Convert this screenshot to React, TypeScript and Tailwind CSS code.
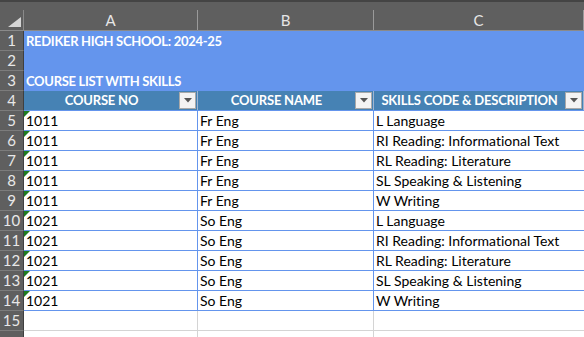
const rows = [
  { no: '1011', name: 'Fr Eng', skill: 'L Language' },
  { no: '1011', name: 'Fr Eng', skill: 'RI Reading: Informational Text' },
  { no: '1011', name: 'Fr Eng', skill: 'RL Reading: Literature' },
  { no: '1011', name: 'Fr Eng', skill: 'SL Speaking & Listening' },
  { no: '1011', name: 'Fr Eng', skill: 'W Writing' },
  { no: '1021', name: 'So Eng', skill: 'L Language' },
  { no: '1021', name: 'So Eng', skill: 'RI Reading: Informational Text' },
  { no: '1021', name: 'So Eng', skill: 'RL Reading: Literature' },
  { no: '1021', name: 'So Eng', skill: 'SL Speaking & Listening' },
  { no: '1021', name: 'So Eng', skill: 'W Writing' }
];

const RowNum = ({ n }: { n?: number }) => (
  <div className="flex h-full w-[24px] shrink-0 items-end justify-center border-r border-b border-r-[#3f3f3f] border-b-[#7c7c7c] bg-[#5f5f5f] pb-[1px] text-[15px] leading-[18px] text-[#e8e8e8]">
    {n}
  </div>
);

const FilterButton = () => (
  <div className="absolute right-[1px] top-[1px] flex h-[17px] w-[17px] items-center justify-center border border-[#a9a9a9] bg-[#f3f3f3]">
    <svg width="8" height="5" viewBox="0 0 8 5">
      <path d="M0 0 L8 0 L4 4.5 Z" fill="#555" />
    </svg>
  </div>
);

const HeaderCell = ({ label, className }: { label: string; className: string }) => (
  <div className={`relative flex h-full items-end border-r border-[#9fb6d1] pb-[1px] ${className}`}>
    <span className="w-full whitespace-nowrap pr-[18px] text-center text-[13px] font-bold leading-[18px] tracking-[-0.2px] text-white">
      {label}
    </span>
    <FilterButton />
  </div>
);

export default function App() {
  return (
    <div className="h-[337px] w-[584px] overflow-hidden bg-white font-['Lato',sans-serif] [font-variant-ligatures:none]">
      <div className="h-[10px] border-t-2 border-[#444] bg-[#5f5f5f]" />
      <div className="flex h-[21px] border-b border-[#8a8a8a] bg-[#5f5f5f] text-[15px] text-[#e6e6e6]">
        <div className="relative w-[24px] shrink-0 border-r border-[#8a8a8a]">
          <svg className="absolute bottom-[3px] right-[2px]" width="13" height="10" viewBox="0 0 13 10">
            <path d="M13 0 L13 10 L0 10 Z" fill="#d6d6d6" />
          </svg>
        </div>
        <div className="flex w-[174px] shrink-0 items-center justify-center border-r border-[#9a9a9a]">A</div>
        <div className="flex w-[176px] shrink-0 items-center justify-center border-r border-[#9a9a9a]">B</div>
        <div className="flex flex-1 items-center justify-center border-r border-[#9a9a9a]">C</div>
      </div>

      <div className="flex h-[20px]">
        <RowNum n={1} />
        <div className="flex flex-1 items-end whitespace-nowrap bg-[#6495ed] pb-[1px] pl-[2px] text-[13px] font-bold leading-[18px] tracking-[-0.3px] text-white">
          REDIKER HIGH SCHOOL: 2024-25
        </div>
      </div>
      <div className="flex h-[20px]">
        <RowNum n={2} />
        <div className="flex-1 bg-[#6495ed]" />
      </div>
      <div className="flex h-[20px]">
        <RowNum n={3} />
        <div className="flex flex-1 items-end whitespace-nowrap bg-[#6495ed] pb-[1px] pl-[2px] text-[13px] font-bold leading-[18px] tracking-[-0.3px] text-white">
          COURSE LIST WITH SKILLS
        </div>
      </div>
      <div className="flex h-[20px]">
        <RowNum n={4} />
        <div className="flex flex-1 border-b border-[#6495ed] bg-[#4682b4]">
          <HeaderCell label="COURSE NO" className="w-[174px] shrink-0" />
          <HeaderCell label="COURSE NAME" className="w-[176px] shrink-0" />
          <HeaderCell label="SKILLS CODE & DESCRIPTION" className="flex-1" />
        </div>
      </div>

      {rows.map((r, i) => (
        <div key={i} className="flex h-[20px]">
          <RowNum n={i + 5} />
          <div className="flex flex-1 border-b border-[#6495ed] text-[14px] leading-[18px] text-black">
            <div className="relative flex w-[174px] shrink-0 items-end border-r border-[#6495ed] pl-[2px]">
              <svg className="absolute left-0 top-0" width="6" height="6" viewBox="0 0 6 6">
                <path d="M0 0 L6 0 L0 6 Z" fill="#1e7b1e" />
              </svg>
              {r.no}
            </div>
            <div className="flex w-[176px] shrink-0 items-end border-r border-[#6495ed] pl-[2px]">{r.name}</div>
            <div className="flex flex-1 items-end whitespace-nowrap pl-[2px]">{r.skill}</div>
          </div>
        </div>
      ))}

      {[15, undefined].map((n, i) => (
        <div key={i} className="flex h-[20px]">
          <RowNum n={n} />
          <div className="flex flex-1 border-b border-[#d4d4d4]">
            <div className="w-[174px] shrink-0 border-r border-[#d4d4d4]" />
            <div className="w-[176px] shrink-0 border-r border-[#d4d4d4]" />
            <div className="flex-1" />
          </div>
        </div>
      ))}
    </div>
  );
}
